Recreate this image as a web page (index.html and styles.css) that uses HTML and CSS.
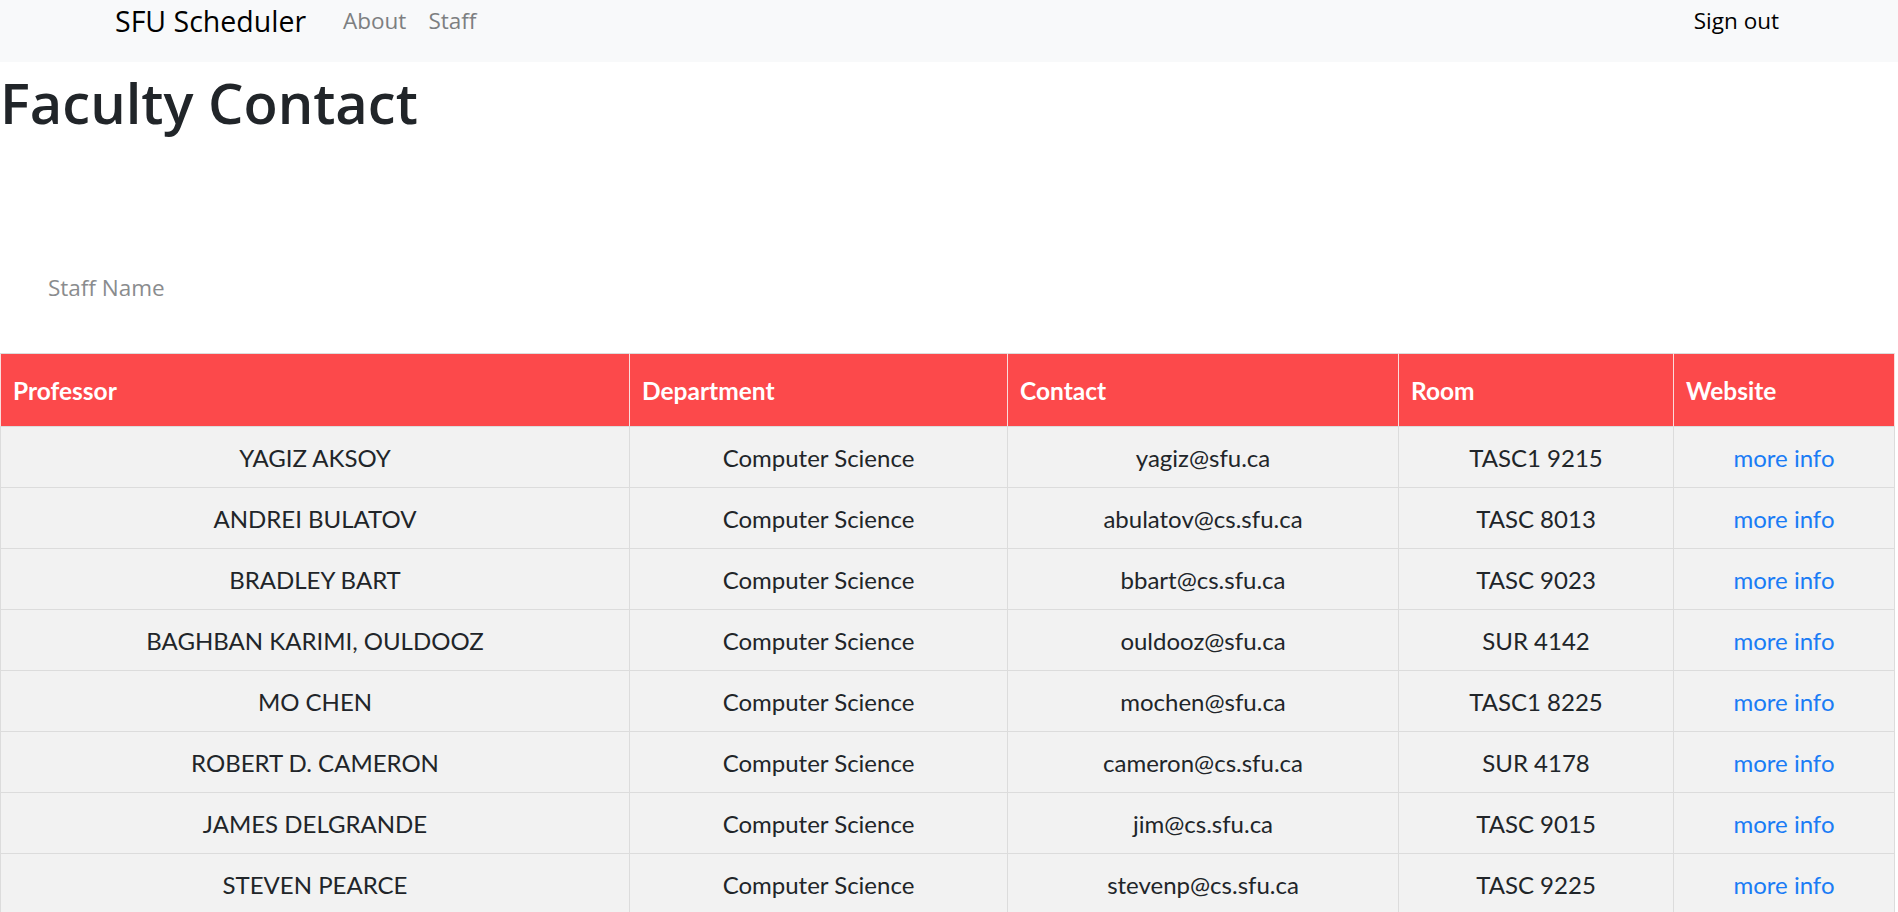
FILE: index.html
```html
<!DOCTYPE html>
<html lang="en">
<head>
<meta charset="utf-8">
<title>Faculty Contact</title>
<link rel="stylesheet" href="styles.css">
</head>
<body>
<nav class="navbar">
  <a class="brand" href="#">SFU Scheduler</a>
  <a class="nav-link" href="#">About</a>
  <a class="nav-link" href="#">Staff</a>
  <a class="nav-link signout" href="#">Sign out</a>
</nav>
<h1 class="title">Faculty Contact</h1>
<div class="search">
  <input class="search-input" type="text" placeholder="Staff Name">
</div>
<table class="staff-table">
  <colgroup>
    <col class="c-prof">
    <col class="c-dept">
    <col class="c-contact">
    <col class="c-room">
    <col class="c-web">
  </colgroup>
  <thead>
    <tr><th>Professor</th><th>Department</th><th>Contact</th><th>Room</th><th>Website</th></tr>
  </thead>
  <tbody>
    <tr><td>YAGIZ AKSOY</td><td>Computer Science</td><td>yagiz@sfu.ca</td><td>TASC1 9215</td><td><a href="#">more info</a></td></tr>
    <tr><td>ANDREI BULATOV</td><td>Computer Science</td><td>abulatov@cs.sfu.ca</td><td>TASC 8013</td><td><a href="#">more info</a></td></tr>
    <tr><td>BRADLEY BART</td><td>Computer Science</td><td>bbart@cs.sfu.ca</td><td>TASC 9023</td><td><a href="#">more info</a></td></tr>
    <tr><td>BAGHBAN KARIMI, OULDOOZ</td><td>Computer Science</td><td>ouldooz@sfu.ca</td><td>SUR 4142</td><td><a href="#">more info</a></td></tr>
    <tr><td>MO CHEN</td><td>Computer Science</td><td>mochen@sfu.ca</td><td>TASC1 8225</td><td><a href="#">more info</a></td></tr>
    <tr><td>ROBERT D. CAMERON</td><td>Computer Science</td><td>cameron@cs.sfu.ca</td><td>SUR 4178</td><td><a href="#">more info</a></td></tr>
    <tr><td>JAMES DELGRANDE</td><td>Computer Science</td><td>jim@cs.sfu.ca</td><td>TASC 9015</td><td><a href="#">more info</a></td></tr>
    <tr><td>STEVEN PEARCE</td><td>Computer Science</td><td>stevenp@cs.sfu.ca</td><td>TASC 9225</td><td><a href="#">more info</a></td></tr>
  </tbody>
</table>
</body>
</html>
```

FILE: styles.css
```css
html, body {
  margin: 0;
  padding: 0;
  background: #ffffff;
}

body {
  font-family: "Open Sans", "Noto Sans", sans-serif;
  color: #212529;
}

.navbar {
  height: 62px;
  background: #f8f9fa;
  display: flex;
  align-items: flex-start;
  padding: 0 106px 0 115px;
  box-sizing: border-box;
}

.brand {
  font-size: 28.5px;
  line-height: 42px;
  color: #000000;
  text-decoration: none;
  margin-right: 26px;
}

.nav-link {
  font-size: 22.5px;
  line-height: 34px;
  margin-top: 4px;
  color: #7d7f81;
  text-decoration: none;
  padding: 0 11px;
}

.signout {
  margin-left: auto;
  padding: 0 13px;
  color: #000000;
}

.title {
  margin: 7px 0 0 0;
  font-size: 56px;
  font-weight: 600;
  line-height: 67px;
  color: #212529;
}

.search {
  margin-top: 137px;
  padding-left: 48px;
  height: 30px;
}

.search-input {
  border: none;
  outline: none;
  padding: 0;
  margin: 0;
  height: 30px;
  line-height: 30px;
  width: 400px;
  font-family: "Open Sans", "Noto Sans", sans-serif;
  font-size: 22.5px;
  color: #495057;
  background: transparent;
}

.search-input::placeholder {
  color: #8a8c8e;
}

.staff-table {
  margin-top: 50px;
  width: 1895px;
  table-layout: fixed;
  border-collapse: collapse;
  font-family: "Lato", sans-serif;
  font-size: 24px;
  border: 1px solid #dcdcdc;
}

.c-prof { width: 629px; }
.c-dept { width: 378px; }
.c-contact { width: 391px; }
.c-room { width: 275px; }

.staff-table th {
  background: #fc494b;
  color: #ffffff;
  font-size: 24.5px;
  font-weight: 700;
  text-align: left;
  height: 72px;
  padding: 0 12px;
  vertical-align: middle;
  border: 1px solid #fbdcdc;
  border-top-color: #dcdcdc;
  border-bottom-color: #dcdcdc;
}

.staff-table td {
  background: #f2f2f2;
  color: #212529;
  text-align: center;
  height: 60px;
  padding: 0 12px;
  vertical-align: middle;
  border: 1px solid #dcdcdc;
}

.staff-table td a {
  color: #1a7cf5;
  text-decoration: none;
}
```
